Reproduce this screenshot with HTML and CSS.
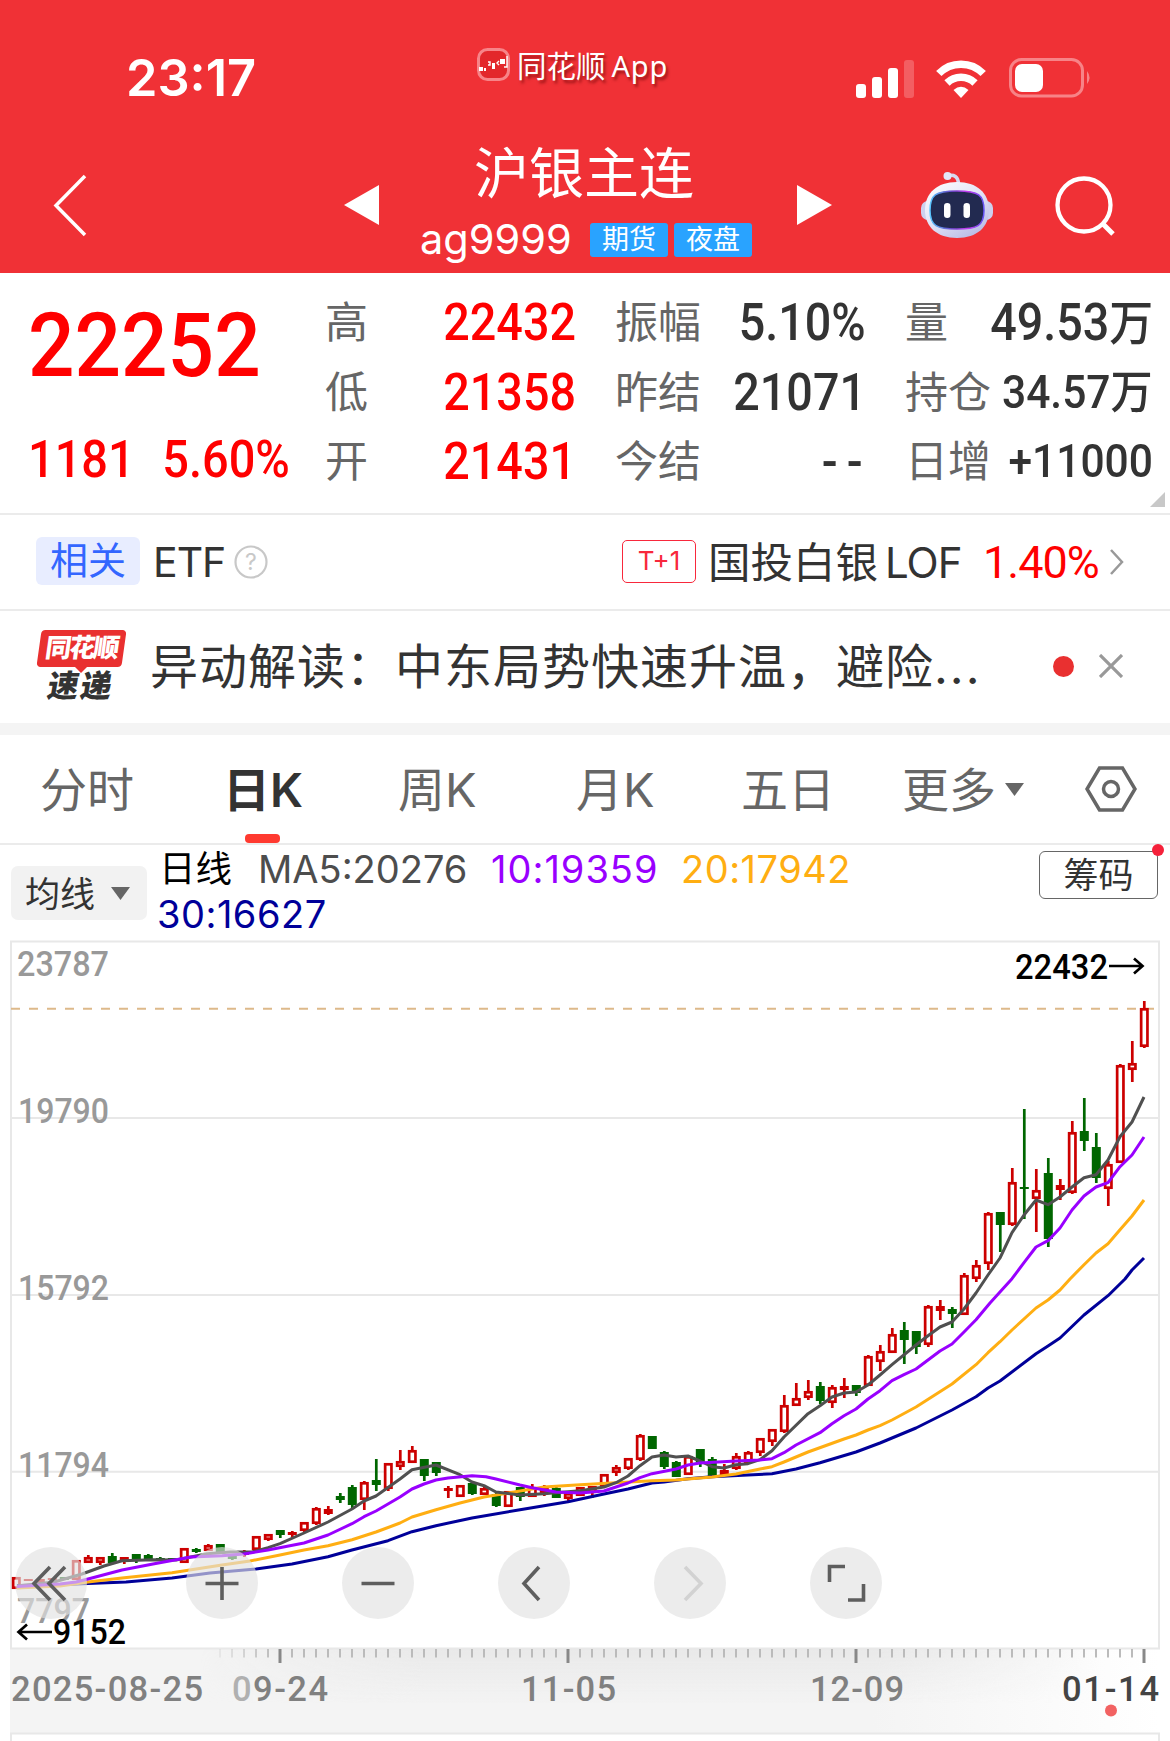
FILE: index.html
```html
<!DOCTYPE html>
<html lang="zh-CN">
<head>
<meta charset="utf-8">
<title>沪银主连 ag9999</title>
<link rel="stylesheet" href="styles.css">
</head>
<body>
<header class="top">
  <div class="status">
    <div class="clock">23:17</div>
    <div class="source">
      <svg class="app-icon" width="33" height="33" viewBox="0 0 33 33"><rect x="1.5" y="1.5" width="30" height="30" rx="9" fill="#e3272b" stroke="#f78488" stroke-width="3"/><path d="M2 19h4v4H2zM7 20h2v3H7zM15 15h3v6h-3zM23 11h5v5h-5z" fill="#fff"/><path d="M11 14h2v3h-2M22 13l-2 2 2 2M30 8v11h-3" fill="none" stroke="#fff" stroke-width="1.4"/></svg>
      <span>同花顺</span><span class="latin">App</span>
    </div>
    <svg class="signal" width="60" height="38" viewBox="0 0 60 38" fill="#fff"><rect y="24" width="10" height="14" rx="3"/><rect x="16" y="17" width="10" height="21" rx="3"/><rect x="32" y="8" width="10" height="30" rx="3"/><rect x="48" width="10" height="38" rx="3" opacity=".22"/></svg>
    <svg class="wifi" width="50" height="38" viewBox="0 0 50 38"><g fill="none" stroke="#fff" stroke-width="7.5"><path d="M2.800 13.500a31 31 0 0 1 44.400 0"/><path d="M11 23a20 20 0 0 1 28 0"/></g><path d="M25 38l-7.500-8q7.500-6.500 15 0z" fill="#fff"/></svg>
    <svg class="battery" width="83" height="40" viewBox="0 0 83 40"><rect x="1.500" y="1.500" width="72" height="36.500" rx="11" fill="none" stroke="#f78387" stroke-width="3"/><rect x="6" y="6" width="28" height="28" rx="7" fill="#fff"/><path d="M78 13q5 6.500 0 13z" fill="#f78387"/></svg>
  </div>
  <nav class="nav">
    <svg class="back" width="34" height="64" viewBox="0 0 34 64"><path d="M32 2L3 31.500 32 61" fill="none" stroke="#fff" stroke-width="3.500"/></svg>
    <svg class="prev" width="35" height="40"><path d="M35 0v40L0 20z" fill="#fff"/></svg>
    <div class="heading">
      <h1>沪银主连</h1>
      <div class="code"><span>ag9999</span><b class="tag">期货</b><b class="tag">夜盘</b></div>
    </div>
    <svg class="next" width="35" height="40"><path d="M0 0v40l35-20z" fill="#fff"/></svg>
    <svg class="robot" width="72" height="68" viewBox="0 0 72 68">
      <defs><linearGradient id="shell" x2="0.700" y2="1"><stop stop-color="#fff"/><stop offset=".6" stop-color="#dfe0f5"/><stop offset="1" stop-color="#babde6"/></linearGradient><linearGradient id="rim"><stop stop-color="#58c7ff"/><stop offset=".4" stop-color="#6a47c9"/><stop offset=".7" stop-color="#c53cf0"/><stop offset="1" stop-color="#6355f5"/></linearGradient></defs>
      <path d="M26 5q11-3 11.500 8" fill="none" stroke="#d6d9f0" stroke-width="3.500"/><circle cx="26.500" cy="5" r="4" fill="#e3e7fa"/>
      <rect x="0" y="30" width="72" height="19" rx="7" fill="#cdd0ee"/>
      <path d="M36 11C56 11 68 22 68 39S56 67 36 67 4 56 4 39 16 11 36 11z" fill="url(#shell)"/>
      <path d="M36 20c22 0 27 4 27 19.500S56 58 36 58 9 55 9 39.500 14 20 36 20z" fill="#222a50" stroke="url(#rim)" stroke-width="1.500"/>
      <rect x="23" y="32" width="6.500" height="15" rx="3.200" fill="#fff"/><rect x="42.500" y="32" width="6.500" height="15" rx="3.200" fill="#fff"/>
    </svg>
    <svg class="search" width="62" height="62" viewBox="0 0 62 62" fill="none" stroke="#fff" stroke-width="4.300"><circle cx="29" cy="29" r="26.500"/><path d="M47.500 47.500L58 58" stroke-width="5"/></svg>
  </nav>
</header>

<section class="quote">
  <div class="price">
    <div class="last">22252</div>
    <div class="change"><span>1181</span><span>5.60%</span></div>
  </div>
  <dl class="stats">
    <dt>高</dt><dd class="up">22432</dd><dt>振幅</dt><dd>5.10%</dd><dt>量</dt><dd>49.53<i>万</i></dd>
    <dt>低</dt><dd class="up">21358</dd><dt>昨结</dt><dd>21071</dd><dt>持仓</dt><dd class="small">34.57<i>万</i></dd>
    <dt>开</dt><dd class="up">21431</dd><dt>今结</dt><dd class="none">--</dd><dt>日增</dt><dd class="small">+11000</dd>
  </dl>
  <svg class="corner" width="15" height="15"><path d="M15 0v15H0z" fill="#c8c8c8"/></svg>
</section>

<section class="related">
  <span class="chip">相关</span><span class="etf">ETF</span>
  <svg class="help" width="34" height="34" viewBox="0 0 34 34"><circle cx="17" cy="17" r="15.500" fill="none" stroke="#c8c8c8" stroke-width="2.200"/><text x="17" y="25" text-anchor="middle">?</text></svg>
  <span class="t1">T+1</span><span class="fund">国投白银<em>LOF</em></span><span class="pct">1.40%</span>
  <svg class="go" width="16" height="26" viewBox="0 0 16 26"><path d="M2 1l11 12L2 25" fill="none" stroke="#999" stroke-width="2.500"/></svg>
</section>

<section class="news">
  <div class="brand"><span class="brand-top">同花顺</span><i class="notch"></i><span class="brand-bottom">速递</span></div>
  <p>异动解读：中东局势快速升温，避险<span class="dots">...</span></p>
  <i class="dot"></i>
  <svg class="close" width="24" height="24"><path d="M1 1l22 22M23 1L1 23" stroke="#999" stroke-width="3.200"/></svg>
</section>

<nav class="tabs">
  <span>分时</span><span class="active">日K</span><span>周K</span><span>月K</span><span>五日</span><span>更多</span>
  <svg class="drop" width="19" height="13"><path d="M0 0h19l-9.500 13z" fill="#666"/></svg>
  <svg class="setting" width="52" height="46" viewBox="0 0 52 46" fill="none" stroke="#666" stroke-width="3.500"><path d="M14.500 2h23L50 23 37.500 44h-23L2 23z"/><circle cx="26" cy="23" r="7.500"/></svg>
</nav>

<section class="legend">
  <button class="ma-button"><span>均线</span><svg width="19" height="13"><path d="M0 0h19l-9.500 13z" fill="#666"/></svg></button>
  <div class="averages"><span class="period">日线</span><span class="ma5">MA5:20276</span><span class="ma10">10:19359</span><span class="ma20">20:17942</span><span class="ma30">30:16627</span></div>
  <button class="chips">筹码</button>
</section>

<section class="chart">
  <svg class="plot" width="1170" height="801" viewBox="0 940 1170 801">
    <defs>
      <linearGradient id="band"><stop offset=".75" stop-color="#f4f4f4"/><stop offset="1" stop-color="#fff"/></linearGradient>
      <linearGradient id="shade" x2="0" y2="1"><stop stop-color="#e9e9e9"/><stop offset="1" stop-color="#e9e9e9" stop-opacity="0"/></linearGradient>
      <linearGradient id="shade-fade"><stop offset="0" stop-color="#000"/><stop offset=".25" stop-color="#fff"/><stop offset=".75" stop-color="#fff"/><stop offset="1" stop-color="#000"/></linearGradient>
      <linearGradient id="tick-fade" gradientUnits="userSpaceOnUse" x1="205" x2="275" y1="0" y2="0"><stop stop-color="#000"/><stop offset="1" stop-color="#fff"/></linearGradient>
      <mask id="shade-mask"><rect x="200" y="1649" width="900" height="60" fill="url(#shade-fade)"/></mask>
      <mask id="tick-mask"><rect x="200" y="1640" width="970" height="70" fill="url(#tick-fade)"/></mask>
    </defs>
    <rect x="10" y="1649" width="1150" height="84" fill="url(#band)"/>
    <rect x="200" y="1649" width="900" height="55" fill="url(#shade)" mask="url(#shade-mask)"/>
    <path d="M11 1118H1159M11 1295H1159M11 1471.700H1159M11 941.500H1159V1648.500H11zM11 1745V1733.500H1159V1745" class="grid"/>
    <g class="scale">
      <text x="17" y="976" textLength="92" lengthAdjust="spacingAndGlyphs">23787</text><text x="18" y="1123" textLength="91" lengthAdjust="spacingAndGlyphs">19790</text><text x="18" y="1300" textLength="91" lengthAdjust="spacingAndGlyphs">15792</text><text x="18" y="1477" textLength="91" lengthAdjust="spacingAndGlyphs">11794</text><text x="17" y="1623" textLength="73" lengthAdjust="spacingAndGlyphs">7797</text>
    </g>
    <path d="M11 1008.700H1154" class="current"/>
    <g id="candles"></g>
    <path class="line ma30" d="M17 1585.500L55 1585 88 1583.500 126 1582 172 1578 210 1573 256 1569 292 1564 328 1556.700 352 1550 388 1540.700 412 1531.700 436 1525.700 472 1518 520 1509.700 568 1501.700 604 1494 628 1489 652 1483 664 1482 688 1478.700 712 1476.700 748 1475 772 1473.700 796 1469 820 1462.700 856 1452 880 1443 916 1428 940 1416 952 1410 976 1396.700 988 1388 1000 1381 1036 1353.700 1048 1346 1060 1338 1084 1315 1108 1295.700 1125 1279 1132 1270 1144 1258"/>
    <path class="line ma20" d="M17 1588L60 1586 88 1582 122 1578 172 1572.700 222 1565 250 1561 280 1555 304 1550 328 1545.700 352 1539.700 376 1532 400 1523 412 1517 436 1509.700 460 1503 484 1497 520 1491 544 1487 580 1484.700 616 1482.700 652 1480.700 676 1480 712 1477 736 1474 760 1469 772 1466.700 784 1462 808 1452 844 1439 856 1435 868 1430 880 1425.700 892 1420 916 1407 952 1384 976 1364.700 988 1352.700 1000 1341.700 1012 1330 1036 1308 1048 1300 1060 1290 1070 1279 1084 1264.700 1096 1253 1108 1243.700 1120 1229.700 1132 1216 1144 1200"/>
    <path class="line ma5" d="M17 1586L54 1582 82 1574 104 1566 122 1560.700 153 1559.700 176 1560 207 1553.700 230 1552 252 1552 268 1547.700 280 1543.700 304 1533 328 1522 352 1509 364 1501 376 1496 400 1479 412 1469.700 436 1465 460 1474.700 472 1482 484 1485.700 496 1492 520 1495 544 1493.700 580 1490.700 604 1487 616 1482.700 628 1476 640 1465.700 652 1457 664 1455 676 1457 688 1456 700 1461 712 1466.700 724 1468 736 1464.700 748 1463.700 760 1459.700 772 1450.700 784 1437 808 1413.700 820 1405.700 832 1397 844 1393 856 1392 868 1385 880 1375 892 1364.700 916 1345 928 1335.700 940 1327 952 1322 964 1309 976 1293 988 1275 1000 1258 1012 1232.700 1024 1215 1036 1200 1048 1204.700 1060 1197 1072 1187 1084 1177.700 1096 1174.700 1108 1160 1120 1136.700 1132 1122 1144 1097"/>
    <path class="line ma10" d="M17 1586.500L60 1584 76 1582 88 1579 122 1570 153 1564 191 1557 222 1555.700 244 1554 268 1550 304 1543 328 1535 352 1523.700 364 1516.700 376 1511 400 1497 412 1489 424 1484 436 1480 448 1478 472 1475.700 486 1476.700 496 1479 520 1485 532 1487.700 556 1492 580 1493 604 1491 628 1483 640 1477.700 652 1473.700 676 1469 688 1465 700 1463 736 1461 760 1460 772 1458.700 784 1452.700 796 1445 820 1432.700 832 1423.700 844 1415.700 856 1409 868 1399 880 1390.700 892 1380.700 904 1374.700 916 1369 928 1360 940 1351 952 1344 964 1332 976 1319.700 990 1303 1012 1278.700 1024 1262.700 1036 1247 1048 1240.700 1060 1228 1072 1210 1084 1196 1096 1187 1108 1182.700 1120 1166.700 1132 1155 1144 1137"/>
    <g class="extreme"><text x="1015" y="979" textLength="93" lengthAdjust="spacingAndGlyphs">22432</text><text x="53" y="1644" textLength="73" lengthAdjust="spacingAndGlyphs">9152</text><path d="M1109 966H1142M1134 958.500L1142.500 966 1134 973.500M52 1632H19M27 1624.500L18.500 1632 27 1639.500"/></g>
    <g id="ticks" mask="url(#tick-mask)"></g>
    <g class="dates"><text x="11" y="1701" textLength="192">2025-08-25</text><text x="232" y="1701" textLength="96"><tspan fill="#b0b0b0">0</tspan>9-24</text><text x="521" y="1701" textLength="95">11-05</text><text x="810" y="1701" textLength="94">12-09</text><text x="1062" y="1701" textLength="97" class="today">01-14</text></g>
    <circle cx="1111" cy="1710.500" r="6" fill="#f26262"/>
  </svg>
  <div class="tools">
    <button><svg viewBox="0 0 72 72"><path d="M35 20L19 36.500 35 53M50 20L34 36.500 50 53"/></svg></button>
    <button><svg viewBox="0 0 72 72"><path d="M36 20V53M19.500 36.500H52.500"/></svg></button>
    <button><svg viewBox="0 0 72 72"><path d="M19.500 36.500H52.500"/></svg></button>
    <button><svg viewBox="0 0 72 72"><path d="M41 20L26 36.500 41 53"/></svg></button>
    <button class="off"><svg viewBox="0 0 72 72"><path d="M31 20L47 36.500 31 53"/></svg></button>
    <button><svg viewBox="0 0 72 72"><path d="M19.500 35V19.500H35M38 53H53.500V37" stroke-width="4"/></svg></button>
  </div>
</section>
<script src="script.js"></script>
</body>
</html>
```
FILE: styles.css
```css
* { box-sizing: border-box; }
body { margin: 0; width: 1170px; height: 1741px; overflow: hidden; background: #fff; color: #333; font-family: Inter, "Noto Sans CJK SC", sans-serif; }
svg { display: block; flex: none; }
button { border: 0; padding: 0; font: inherit; color: inherit; }
span { white-space: nowrap; }

.top { height: 273px; background: #f03136; color: #fff; }
.status { display: flex; height: 118px; padding: 48px 0 0 126px; }
.clock { width: 351px; margin-top: 2px; font-size: 50.500px; font-weight: 600; line-height: 56px; }
.source { display: flex; width: 379px; height: 36px; font-size: 29.5px; line-height: 36px; text-shadow: 2px 3px 3px rgba(100, 0, 0, .6); }
.app-icon { margin-right: 7px; }
.latin { margin-left: 6px; font-family: "Noto Sans", sans-serif; font-size: 29px; letter-spacing: .8px; }
.signal { margin-top: 12px; }
.wifi { margin: 12px 0 0 20px; }
.battery { margin: 10px 0 0 23px; }
.nav { display: flex; height: 155px; }
.back { margin: 56px 0 0 53px; }
.prev { margin: 67px 0 0 257px; }
.heading { width: 418px; }
h1 { margin: 22px 0 0 95px; font-size: 55px; font-weight: 400; line-height: 66px; }
.code { display: flex; align-items: center; margin-left: 41px; height: 66px; font-size: 41.500px; }
.code span { width: 170px; }
.tag { width: 78px; height: 34px; margin: 2px 6px 0 0; border-radius: 3px; background: #29a3ff; font-size: 27px; font-weight: 400; line-height: 33px; text-align: center; }
.next { margin-top: 67px; }
.robot { margin: 53px 0 0 89px; }
.search { margin: 58px 0 0 62px; }

.quote { position: relative; display: flex; height: 242px; border-bottom: 2px solid #ebebeb; }
.price { width: 325px; padding: 18px 0 0 28px; color: #f00; font-family: Roboto, sans-serif; font-weight: 500; }
.last, .change { transform: scaleX(.92); transform-origin: 0 50%; }
.last { font-size: 89px; line-height: 110px; }
.change { display: flex; gap: 30px; margin-top: 29px; font-size: 51px; line-height: 60px; }
.stats { display: grid; grid-template-columns: 110px 141px 123px 167px 123px 164px; grid-template-rows: repeat(3, 69.500px); margin: 15px 0 0; align-items: center; }
.stats dt { margin: 0; color: #666; font-size: 43px; line-height: 71px; white-space: nowrap; }
.stats dt:nth-of-type(3n+2), .stats dt:nth-of-type(3n) { padding-left: 39px; }
.stats dd { justify-self: end; margin: 0; font: 500 51px/69px Roboto, "Noto Sans CJK SC", sans-serif; white-space: nowrap; transform: scaleX(.915); transform-origin: 100% 50%; }
.stats dd.up { color: #f00; }
.stats dd.small { font-size: 46.500px; }
.stats dd.none { letter-spacing: 10px; margin-right: -6px; }
.stats i { font-style: normal; font-size: 48px; }
.stats .small i { font-size: 46px; }
.corner { position: absolute; right: 5px; bottom: 6px; }

.related { display: flex; align-items: center; height: 96px; padding-left: 36px; border-bottom: 2px solid #ebebeb; }
.chip { width: 104px; height: 48px; margin: 0 13px 2px 0; border-radius: 6px; background: #e8edff; color: #36f; font-size: 38px; line-height: 46px; text-align: center; }
.etf { width: 81px; font-size: 41px; letter-spacing: -1px; }
.help text { fill: #c8c8c8; font: 23px Inter, sans-serif; }
.t1 { width: 74px; height: 43px; margin: 0 12px 2px 354px; border: 1.500px solid #f8283c; border-radius: 5px; color: #f8283c; font-size: 26px; line-height: 39px; text-align: center; }
.fund { width: 275px; margin-bottom: 6px; font-size: 42.500px; }
.fund em { margin-left: 7px; font-style: normal; font-size: 42px; letter-spacing: -1px; }
.pct { width: 126px; color: #f00; font: 45px Roboto, sans-serif; letter-spacing: -1px; }

.news { display: flex; align-items: center; height: 124px; padding: 0 0 14px 37px; box-shadow: inset 0 -12px #f4f4f4; }
.brand { display: flex; flex-direction: column; align-items: center; width: 88px; height: 72px; font-weight: 900; }
.brand-top { width: 85px; height: 37px; border-radius: 4px; background: #e93030; color: #fff; font-size: 26px; line-height: 36px; text-align: center; letter-spacing: -2px; transform: skewX(-8deg); }
.notch { height: 6px; border: 6px solid transparent; border-top-color: #e93030; border-bottom: 0; }
.brand-bottom { margin-top: -3px; font-size: 31px; line-height: 32px; letter-spacing: 2px; transform: skewX(-10deg); }
.news p { width: 862px; margin: -6px 0 0 25px; font-size: 48px; letter-spacing: 1px; white-space: nowrap; }
.dots { letter-spacing: 2px; }
.dot { width: 21px; height: 21px; margin-left: 41px; border-radius: 50%; background: #e93030; }
.close { margin-left: 25px; }

.tabs { display: flex; align-items: center; height: 110px; padding-left: 40px; border-bottom: 2px solid #ebebeb; color: #666; font-size: 47px; }
.tabs span { height: 108px; line-height: 109px; }
.tabs span:nth-child(1) { width: 183px; }
.tabs span:nth-child(2) { width: 175px; }
.tabs span:nth-child(3) { width: 178px; }
.tabs span:nth-child(4) { width: 165px; }
.tabs span:nth-child(5) { width: 161px; }
.tabs span:nth-child(6) { width: 103px; }
.tabs .active { position: relative; color: #333; font-weight: 600; }
.active::after { content: ""; position: absolute; left: 22px; bottom: 0; width: 35px; height: 9px; border-radius: 4px; background: #ff3a30; }
.setting { margin-left: 61px; }

.legend { display: flex; height: 95px; padding-left: 11px; }
.ma-button { display: flex; align-items: center; gap: 16px; width: 136px; height: 54px; margin-top: 21px; padding-left: 14px; border-radius: 7px; background: #f2f2f2; font-size: 35px; }
.ma-button span { margin-bottom: 4px; }
.averages { display: flex; flex-wrap: wrap; align-content: flex-start; width: 750px; margin: 2px 132px 0 10px; font-size: 38px; line-height: 45px; }
.period { width: 101px; padding-left: 2px; color: #000; font-size: 36.500px; }
.averages .ma5 { width: 233px; color: #4d4d4d; }
.averages .ma10 { width: 190px; color: #90f; letter-spacing: 1px; }
.averages .ma20 { width: 200px; color: #ffae12; letter-spacing: .5px; }
.averages .ma30 { color: #000099; letter-spacing: .5px; }
.chips { position: relative; width: 119px; height: 48px; margin-top: 6px; border: 1.500px solid #666; border-radius: 6px; background: #fff; font-size: 35px; line-height: 43px; }
.chips::after { content: ""; position: absolute; top: -8px; right: -7px; width: 12px; height: 12px; border-radius: 50%; background: #f5213a; }

.chart { position: relative; height: 801px; }
.plot text { font-family: Roboto, sans-serif; font-size: 34.500px; font-weight: 500; }
.grid { fill: none; stroke: #e8e8e8; stroke-width: 2; }
.scale { fill: #999; }
.current { stroke: #ddb98a; stroke-width: 2; stroke-dasharray: 9 9; }
.line { fill: none; stroke-width: 3; stroke-linejoin: round; }
.line.ma5 { stroke: #505050; }
.line.ma10 { stroke: #90f; }
.line.ma20 { stroke: #ffae12; }
.line.ma30 { stroke: #000099; }
.extreme path { fill: none; stroke: #000; stroke-width: 2.700; }
.dates { fill: #808080; }
.today { fill: #444; }
.tools { position: absolute; left: 15px; top: 607px; display: flex; gap: 84px; }
.tools button { width: 72px; height: 72px; border-radius: 50%; background: rgba(226, 226, 226, .65); }
.tools button:first-child { margin-right: 15px; }
.tools path { fill: none; stroke: #5e5e5e; stroke-width: 3.600; }
.tools .off path { stroke: #d2d2d2; }
```
FILE: script.js
```js
// Each row: direction, high, body top, body bottom, low (plot coordinates).
const candles = `r 1577 1577 1589 1589|r 1579 1579 1581 1581|r 1579 1579 1583 1583|r 1578 1578 1580 1580|g 1577 1577 1580 1580
r 1560 1560 1580 1580|r 1555 1557 1563 1563|r 1557 1557 1563 1565|g 1553 1556 1563 1563|r 1557 1557 1560 1564
g 1554 1554 1561 1563|g 1554 1555 1559 1559|g 1557 1558 1561 1561|g 1558 1558 1561 1561|r 1548 1548 1563 1563
g 1548 1549 1552 1553|r 1544 1545 1551 1551|g 1544 1544 1552 1552|g 1555 1556 1559 1560|r 1550 1552 1555 1557
r 1536 1536 1550 1550|r 1534 1534 1540 1541|g 1530 1530 1535 1538|r 1531 1532 1535 1537|r 1522 1522 1531 1532
r 1507 1508 1524 1525|r 1506 1509 1514 1515|g 1493 1496 1500 1503|g 1485 1487 1505 1508|r 1481 1482 1500 1510
g 1459 1480 1485 1491|r 1463 1463 1489 1491|r 1450 1461 1467 1470|r 1446 1450 1463 1463|g 1459 1459 1476 1481
g 1462 1462 1473 1476|r 1486 1488 1491 1498|r 1485 1485 1497 1497|g 1482 1483 1494 1495|r 1485 1488 1495 1495
g 1493 1494 1506 1507|r 1491 1491 1507 1507|g 1487 1487 1497 1501|r 1484 1487 1497 1497|r 1485 1487 1493 1496
g 1487 1488 1498 1498|r 1493 1493 1499 1501|r 1487 1487 1496 1496|r 1486 1486 1493 1498|r 1474 1474 1486 1486
r 1465 1467 1473 1476|r 1458 1458 1469 1470|r 1434 1435 1460 1461|g 1436 1436 1449 1449|g 1451 1452 1467 1469
g 1461 1462 1477 1477|r 1456 1456 1475 1475|g 1449 1449 1463 1467|g 1457 1459 1476 1476|r 1464 1470 1475 1475
r 1453 1456 1469 1470|r 1451 1452 1463 1463|r 1438 1438 1453 1456|r 1429 1429 1442 1446|r 1395 1405 1432 1433
r 1383 1398 1406 1406|r 1380 1391 1398 1400|g 1382 1386 1401 1404|r 1385 1387 1403 1408|r 1378 1386 1390 1398
g 1385 1385 1393 1396|r 1355 1356 1386 1386|r 1345 1351 1362 1371|r 1328 1334 1353 1353|g 1322 1330 1340 1364
g 1331 1331 1347 1354|r 1305 1306 1345 1347|r 1300 1306 1311 1320|g 1307 1309 1314 1328|r 1273 1275 1315 1315
r 1260 1265 1279 1282|r 1212 1213 1264 1270|g 1212 1212 1225 1252|r 1168 1182 1225 1226|g 1109 1187 1189 1219
r 1169 1190 1199 1232|g 1158 1173 1239 1247|r 1179 1185 1190 1200|r 1121 1132 1193 1194|g 1098 1131 1141 1151
g 1133 1147 1178 1183|r 1161 1164 1189 1206|r 1064 1065 1163 1163|r 1041 1063 1070 1082|r 1001 1008 1047 1048`
  .split(/[|\n]/).map(row => row.trim().split(" "));

document.getElementById("candles").innerHTML = candles.map(([dir, ...v], i) => {
  const x = 16.300 + 12 * i;
  const [high, top, bottom, low] = v.map(Number);
  const color = dir === "r" ? "#cc0000" : "#006600";
  const wick = `<path d="M${x} ${high}V${top + 1}M${x} ${bottom - 1}V${low}" stroke="${color}" stroke-width="2.700"/>`;
  const h = bottom - top;
  const body = dir === "r" && h > 5
    ? `<rect x="${x - 3.150}" y="${top + 1.300}" width="6.300" height="${h - 2.600}" fill="#fff" stroke="${color}" stroke-width="2.700"/>`
    : `<rect x="${x - 4.500}" y="${top}" width="9" height="${h}" fill="${color}"/>`;
  return wick + body;
}).join("");

// One tick per trading day, a long one every 24 days.
document.getElementById("ticks").innerHTML = Array.from({ length: 78 }, (_, i) => {
  const major = i % 24 === 0;
  return `<path d="M${1144 - 12 * i} 1649V${major ? 1663 : 1657.500}" stroke="${major ? "#888" : "#bbb"}" stroke-width="${major ? 3 : 2}"/>`;
}).join("");
```
